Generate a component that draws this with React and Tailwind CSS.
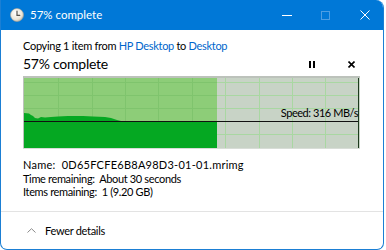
import React from 'react';

const font = { fontFamily: 'Lato, "Segoe UI", "Liberation Sans", sans-serif' };

function ClockIcon() {
  return (
    <svg width="14" height="14" viewBox="0 0 14 14">
      <defs>
        <radialGradient id="clk" cx="40%" cy="35%" r="70%">
          <stop offset="0%" stopColor="#ffffff" />
          <stop offset="70%" stopColor="#ece6d8" />
          <stop offset="100%" stopColor="#b9b2a2" />
        </radialGradient>
      </defs>
      <circle cx="7" cy="7" r="6.5" fill="url(#clk)" stroke="#a9a396" strokeWidth="0.6" />
      <path d="M7 3.2 V7.3 H9.8" stroke="#55524c" strokeWidth="1.2" fill="none" strokeLinecap="round" />
    </svg>
  );
}

function Graph() {
  // speed area outline, local coords (0..336, 0..72)
  const speed =
    'M1 37 L6 37.5 L8 39 L10 40 L12 42 L15 42.5 L18 41 L22 41.5 L28 41 L35 40.5 L45 40 L60 40 L70 40.5 L82 41 L88 42 L94 44 L98 45 L194 45 L194 72 L1 72 Z';
  const vx = [35, 69, 102, 135, 169, 202, 236, 269, 302];
  const hy = [6, 19, 32, 58];
  return (
    <div className="relative w-[337px] h-[73px]">
      <svg width="337" height="73" className="block">
        <rect x="0" y="0" width="337" height="73" fill="#c8d3c6" />
        <rect x="1" y="2" width="193" height="70" fill="#8dcd78" />
        {vx.map((x) => (
          <line key={x} x1={x + 0.5} y1="2" x2={x + 0.5} y2="72" stroke={x < 194 ? '#7fc46d' : '#a9d7a2'} strokeWidth="1" />
        ))}
        {hy.map((y) => (
          <g key={y}>
            <line x1="1" y1={y + 0.5} x2="194" y2={y + 0.5} stroke="#7fc46d" strokeWidth="1" />
            <line x1="194" y1={y + 0.5} x2="335" y2={y + 0.5} stroke="#a9d7a2" strokeWidth="1" />
          </g>
        ))}
        <path d={speed} fill="#05a822" />
        <line x1="1" y1="45.5" x2="336" y2="45.5" stroke="#111" strokeWidth="1" />
        <line x1="335.5" y1="2" x2="335.5" y2="72" stroke="#1d3a1d" strokeWidth="1" />
        <rect x="0" y="0" width="337" height="2" fill="#bcc2bb" />
        <rect x="0" y="0" width="1" height="73" fill="#bcc2bb" />
        <rect x="0" y="72" width="337" height="1" fill="#d8ddd7" />
      </svg>
      <span className="absolute right-[2px] top-[30px] text-[11px] leading-[14px] tracking-[-0.45px] text-black whitespace-nowrap" style={font}>
        Speed: 316 MB/s
      </span>
    </div>
  );
}

export default function App() {
  return (
    <div className="w-[386px] h-[250px] bg-white overflow-hidden" style={font}>
      <div className="w-[384px] h-[250px] flex flex-col bg-white border-x border-b border-[#1b7fd4] rounded-tr-[8px] rounded-b-[7px] overflow-hidden">
        {/* Title bar */}
        <div className="h-[30px] shrink-0 bg-[#0078d7] flex items-center pl-[10px] -mx-px">
          <ClockIcon />
          <span className="ml-[6px] text-[11.5px] text-white leading-none">57% complete</span>
          <div className="ml-auto flex h-full">
            <div className="w-[39px] h-full flex items-center justify-center">
              <div className="w-[10px] h-px bg-white" />
            </div>
            <div className="w-[39px] h-full flex items-center justify-center">
              <div className="w-[9px] h-[9px] border border-[#4d9ee3]" />
            </div>
            <div className="w-[39px] h-full flex items-center justify-center">
              <svg width="10" height="10" viewBox="0 0 10 10">
                <path d="M0.5 0.5 L9.5 9.5 M9.5 0.5 L0.5 9.5" stroke="#fff" strokeWidth="1" />
              </svg>
            </div>
          </div>
        </div>

        {/* Body */}
        <div className="pl-[22px] pr-[25px] pt-[8px]">
          <div className="text-[11px] leading-[16px] tracking-[-0.3px] text-black whitespace-nowrap">
            Copying 1 item from <span className="text-[#0066cc]">HP Desktop</span> to{' '}
            <span className="text-[#0066cc]">Desktop</span>
          </div>
          <div className="flex items-center h-[22px] mt-[-1px]">
            <span className="text-[14px] leading-none tracking-[-0.25px] text-black">57% complete</span>
            <div className="ml-auto flex items-center">
              <svg width="6" height="7" viewBox="0 0 6 7" className="mr-[33px]">
                <rect x="0" y="0" width="2" height="7" fill="#000" />
                <rect x="4" y="0" width="2" height="7" fill="#000" />
              </svg>
              <svg width="7" height="7" viewBox="0 0 7 7" className="mr-[3px]">
                <path d="M0.5 0.5 L6.5 6.5 M6.5 0.5 L0.5 6.5" stroke="#000" strokeWidth="1.6" />
              </svg>
            </div>
          </div>
          <div className="mt-[1px]">
            <Graph />
          </div>
          <div className="mt-[9px] text-[11px] leading-[13.5px] text-black whitespace-nowrap">
            <div className="tracking-[0.25px]">Name:&nbsp; 0D65FCFE6B8A98D3-01-01.mrimg</div>
            <div className="tracking-[-0.35px]">Time remaining:&nbsp; About 30 seconds</div>
            <div className="tracking-[-0.35px]">Items remaining:&nbsp; 1 (9.20 GB)</div>
          </div>
        </div>

        {/* Footer */}
        <div className="mt-auto h-[38px] border-t border-[#e3e3e3] flex items-center pl-[26px]">
          <svg width="9" height="5" viewBox="0 0 9 5">
            <path d="M0.5 4.5 L4.5 0.7 L8.5 4.5" stroke="#8a8a8a" strokeWidth="1" fill="none" />
          </svg>
          <span className="ml-[9px] text-[11px] tracking-[-0.3px] text-black leading-none">Fewer details</span>
        </div>
      </div>
    </div>
  );
}
